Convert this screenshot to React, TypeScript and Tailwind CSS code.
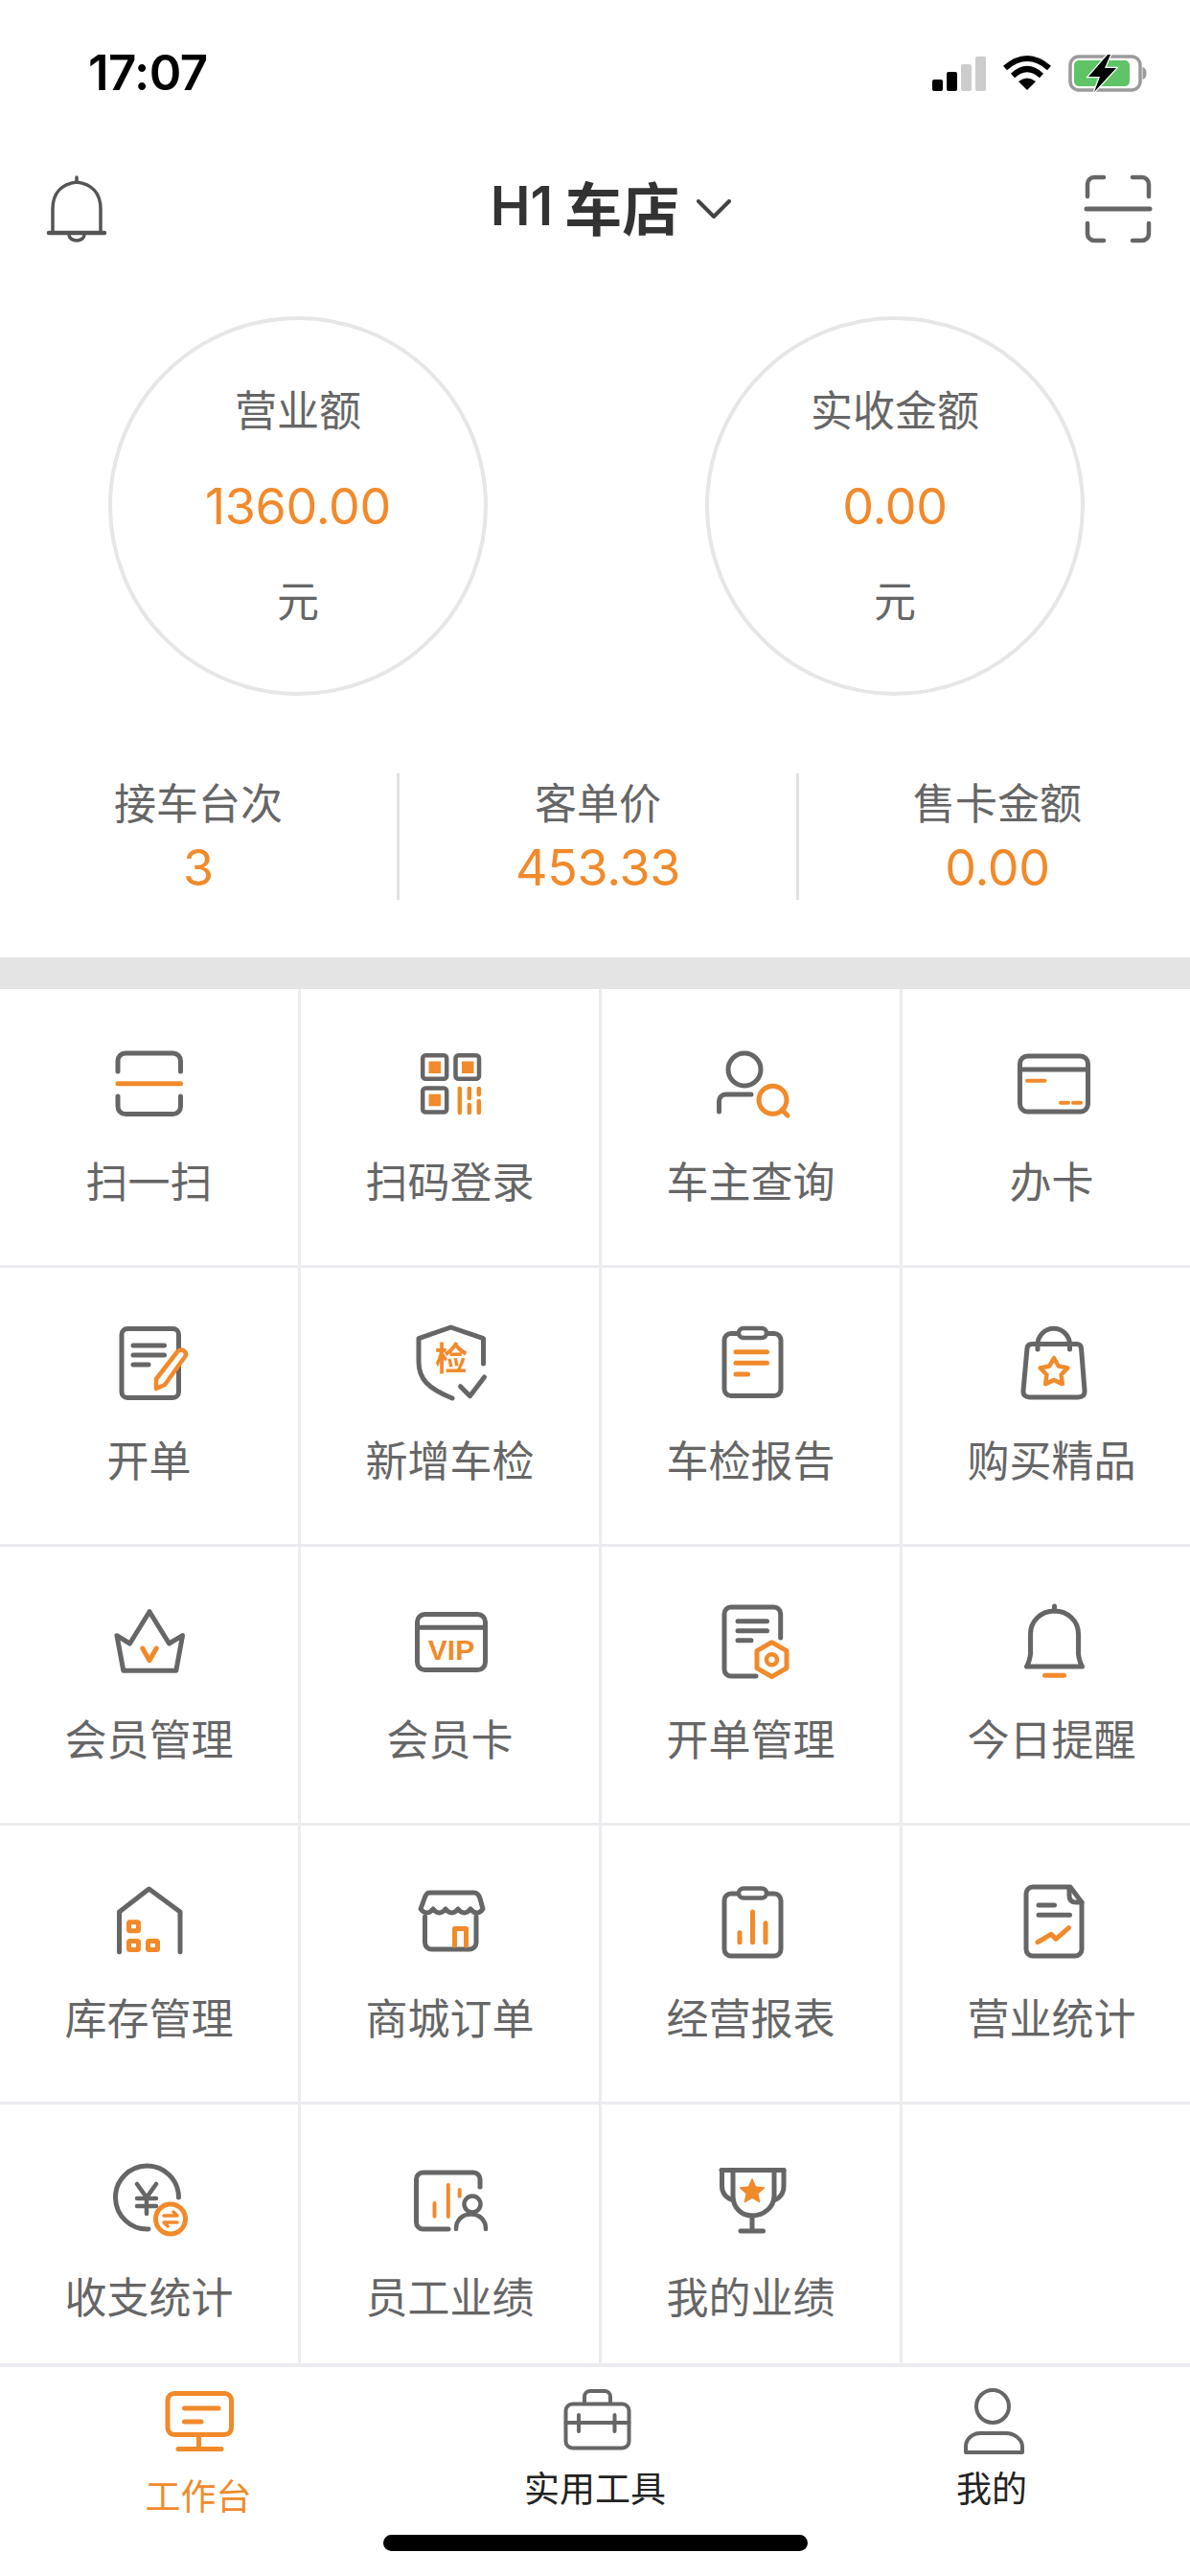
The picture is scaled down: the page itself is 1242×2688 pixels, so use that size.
import type { ReactNode } from "react";

const GRAY = "#666666";
const ORANGE = "#f18a2b";

function starPoints(cx: number, cy: number, R: number, r: number) {
  const pts: string[] = [];
  for (let i = 0; i < 10; i++) {
    const a = (-90 + i * 36) * (Math.PI / 180);
    const d = i % 2 === 0 ? R : r;
    pts.push(`${(cx + d * Math.cos(a)).toFixed(1)},${(cy + d * Math.sin(a)).toFixed(1)}`);
  }
  return pts.join(" ");
}

function Icon({ children, color = GRAY, width = 5 }: { children: ReactNode; color?: string; width?: number }) {
  return (
    <svg
      className="h-[100px] w-[100px] shrink-0"
      viewBox="0 0 100 100"
      fill="none"
      stroke={color}
      strokeWidth={width}
      strokeLinecap="round"
      strokeLinejoin="round"
    >
      {children}
    </svg>
  );
}

const gridItems: { label: string; icon: ReactNode }[] = [
  {
    label: "扫一扫",
    icon: (
      <Icon>
        <path d="M17 36V25a8 8 0 0 1 8-8h49.5a8 8 0 0 1 8 8v11" />
        <path d="M17 62v10.500a8 8 0 0 0 8 8h49.500a8 8 0 0 0 8-8V62" />
        <path d="M17 48.700h65.500" stroke={ORANGE} />
      </Icon>
    ),
  },
  {
    label: "扫码登录",
    icon: (
      <Icon width={4.5}>
        <rect x="21.200" y="19.200" width="25" height="24.500" rx="3" />
        <rect x="55.500" y="19.200" width="24.500" height="24.500" rx="3" />
        <rect x="21.200" y="53.500" width="25" height="25" rx="3" />
        <g fill={ORANGE} stroke="none">
          <rect x="27.500" y="25.500" width="12.500" height="12.500" />
          <rect x="62" y="25.500" width="12.500" height="12.500" />
          <rect x="27.500" y="59.700" width="12.500" height="12.500" />
        </g>
        <path d="M59.800 54v25M69.800 54v10M69.800 71v8M79.800 54v6M79.800 67v12" stroke={ORANGE} />
      </Icon>
    ),
  },
  {
    label: "车主查询",
    icon: (
      <Icon>
        <circle cx="43" cy="34" r="17" />
        <path d="M16.500 78V67a7 7 0 0 1 7-7H50" />
        <circle cx="72.500" cy="65.700" r="14.500" stroke={ORANGE} />
        <path d="M82 76l6 6" stroke={ORANGE} />
      </Icon>
    ),
  },
  {
    label: "办卡",
    icon: (
      <Icon>
        <rect x="16.500" y="20" width="71" height="58" rx="8" />
        <path d="M16.500 34h71" />
        <path d="M24 45.700h18.500M59 68.700h8M72 68.700h8" stroke={ORANGE} strokeWidth="4" />
      </Icon>
    ),
  },
  {
    label: "开单",
    icon: (
      <Icon>
        <rect x="21" y="13.500" width="59.500" height="72" rx="6" />
        <path d="M33 31h32.500M33 41h32.500M33 51h16" />
        <path
          d="M79.500 37Q84 34 87 37.500Q89 40 87.500 42L66 72L57 76L57 66Z"
          fill="#ffffff"
          stroke={ORANGE}
          strokeWidth="4.500"
        />
      </Icon>
    ),
  },
  {
    label: "新增车检",
    icon: (
      <Icon>
        <path d="M84.500 50V23.700L50.500 12L17 23.700V48C17 66 27 76 52 86" />
        <path d="M60.500 73.700L70.500 83.700L85.500 64" />
        <text
          x="51"
          y="57"
          textAnchor="middle"
          fontSize="34"
          fontWeight="700"
          fill={ORANGE}
          stroke="none"
          fontFamily='"Noto Sans CJK SC", sans-serif'
        >
          检
        </text>
      </Icon>
    ),
  },
  {
    label: "车检报告",
    icon: (
      <Icon>
        <rect x="22" y="18.500" width="59" height="65" rx="7" />
        <rect x="37" y="13" width="29" height="10" rx="5" fill="#ffffff" strokeWidth="4.500" />
        <path d="M34 37.700h32.500M34 49.300h32.500M34 61h12.500" stroke={ORANGE} />
      </Icon>
    ),
  },
  {
    label: "购买精品",
    icon: (
      <Icon>
        <path d="M29 29.500H76Q80 29.500 80.500 34L84 78Q84.500 85 77 85H27Q19.500 85 20 78L24 34Q24.500 29.500 29 29.500Z" />
        <path d="M35 35V30A16.700 16.700 0 0 1 68.500 30V35" />
        <polygon points={starPoints(52, 59, 15, 8)} stroke={ORANGE} strokeWidth="4.500" />
      </Icon>
    ),
  },
  {
    label: "会员管理",
    icon: (
      <Icon>
        <path d="M50 17.700L70.500 51L84.500 42.700L77.800 79.300H22.800L16 42.700L29.500 51Z" />
        <path d="M42.800 56L50 68.700L57.200 56" stroke={ORANGE} />
      </Icon>
    ),
  },
  {
    label: "会员卡",
    icon: (
      <Icon>
        <rect x="15.500" y="20.500" width="71" height="58" rx="8" />
        <path d="M15.500 34.300h71" />
        <text
          x="51"
          y="68"
          textAnchor="middle"
          fontSize="30"
          fontWeight="700"
          fill={ORANGE}
          stroke="none"
          fontFamily='"Liberation Sans", sans-serif'
        >
          VIP
        </text>
      </Icon>
    ),
  },
  {
    label: "开单管理",
    icon: (
      <Icon>
        <path d="M80.700 45V20a7 7 0 0 0-7-7H29a7 7 0 0 0-7 7v58a7 7 0 0 0 7 7h26" />
        <path d="M36 27.700h30.500M36 37.700h30.500M36 47.700h14" />
        <path d="M71.500 49.700L87 58.700V76.700L71.500 85.700L56 76.700V58.700Z" fill="#ffffff" stroke={ORANGE} />
        <circle cx="71.500" cy="67.700" r="5.500" stroke={ORANGE} strokeWidth="4.500" />
      </Icon>
    ),
  },
  {
    label: "今日提醒",
    icon: (
      <Icon>
        <path d="M23.500 75H81.500Q78.500 70 77.500 62V41C77.500 27 66 17 52.500 17C39 17 27.500 27 27.500 41V62Q26.500 70 23.500 75Z" />
        <path d="M52.500 12v5" />
        <path d="M42.500 84.300h20" stroke={ORANGE} />
      </Icon>
    ),
  },
  {
    label: "库存管理",
    icon: (
      <Icon>
        <path d="M18.500 81.700V40L49.500 16L82 40V81.700" />
        <g stroke={ORANGE} strokeWidth="5">
          <rect x="28.500" y="50.800" width="10" height="9" rx="1" />
          <rect x="28.500" y="70.500" width="10" height="9" rx="1" />
          <rect x="48.500" y="70.500" width="10" height="9" rx="1" />
        </g>
      </Icon>
    ),
  },
  {
    label: "商城订单",
    icon: (
      <Icon>
        <path d="M23.500 45V72a7 7 0 0 0 7 7H70a7 7 0 0 0 7-7V45" />
        <path d="M28 20H75Q79 20 81 26L84 37Q78 45 71 37Q64.500 45 58 37Q51.500 45 45 37Q38.500 45 32 37Q25.500 45 19 37L23 26Q25 20 28 20Z" fill="#ffffff" />
        <path d="M54.500 75V57.500H66.500V75" stroke={ORANGE} />
      </Icon>
    ),
  },
  {
    label: "经营报表",
    icon: (
      <Icon>
        <rect x="22" y="21" width="59" height="65" rx="7" />
        <rect x="37" y="15.500" width="29" height="10" rx="5" fill="#ffffff" strokeWidth="4.500" />
        <path d="M38 61.700v10M51.500 40v31.700M65 51.700v20" stroke={ORANGE} />
      </Icon>
    ),
  },
  {
    label: "营业统计",
    icon: (
      <Icon>
        <path d="M69 14H30a7 7 0 0 0-7 7V79a7 7 0 0 0 7 7H74a7 7 0 0 0 7-7V30Z" />
        <path d="M68 15V23Q68 30 75 30H81" />
        <path d="M36 33h16.500M36 43.300h32.500" />
        <path d="M35 71.700L49 63.300L54 68.300L67.500 56.700" stroke={ORANGE} />
      </Icon>
    ),
  },
  {
    label: "收支统计",
    icon: (
      <Icon>
        <path d="M80.500 47A33 33 0 1 0 49 80" />
        <path d="M37 33L47 47L57 33M37 48H57M37 56H57M47 47V64" strokeWidth="4.500" />
        <circle cx="72" cy="69.500" r="15.500" fill="#ffffff" stroke={ORANGE} />
        <path d="M65 66H79L75 62M79 73H65L69 77" stroke={ORANGE} strokeWidth="3.500" />
      </Icon>
    ),
  },
  {
    label: "员工业绩",
    icon: (
      <Icon>
        <path d="M81 36V28a7 7 0 0 0-7-7H21.500a7 7 0 0 0-7 7V73a7 7 0 0 0 7 7H48" />
        <path d="M33.500 53v13.700M47.800 34v33M59.700 39v6.700" stroke={ORANGE} strokeWidth="4" />
        <circle cx="73" cy="54" r="8.500" strokeWidth="4.500" />
        <path d="M56 80C56 70 63 64.500 71.500 64.500C80 64.500 87 70 87 80" strokeWidth="4.500" />
      </Icon>
    ),
  },
  {
    label: "我的业绩",
    icon: (
      <Icon>
        <path d="M19 18.500H84" />
        <path d="M31 18.500V45C31 58 40 66 51 66C62 66 74 58 74 45V18.500" />
        <path d="M19.500 18.500V35Q19.500 46 31 50M84 18.500V35Q84 46 74 50" />
        <path d="M51 66V82M39 82H62.500" />
        <polygon points={starPoints(51, 41, 13, 6)} fill={ORANGE} stroke={ORANGE} strokeWidth="1.500" />
      </Icon>
    ),
  },
];

function StatusBar() {
  return (
    <div className="flex h-[152px] items-center pl-[92px] pr-[45px]">
      <span className="font-['Inter',sans-serif] text-[51px] font-semibold tracking-[-0.6px] text-black">17:07</span>
      <div className="ml-auto flex items-center gap-[17px]">
        <div className="flex h-[38px] items-end gap-[4px]">
          <div className="h-[12px] w-[11px] rounded-[2px] bg-black" />
          <div className="h-[20px] w-[11px] rounded-[2px] bg-black" />
          <div className="h-[28px] w-[11px] rounded-[2px] bg-[#cccccc]" />
          <div className="h-[36px] w-[11px] rounded-[2px] bg-[#cccccc]" />
        </div>
        <svg className="h-[38px] w-[52px]" viewBox="0 0 52 38" fill="none" stroke="#000000" strokeWidth="6">
          <path d="M3 14Q26 -6 49 14" />
          <path d="M11 22Q26 8 41 22" />
          <path d="M26 37L17 28Q26 21 35 28Z" fill="#000000" stroke="none" />
        </svg>
        <svg className="h-[39px] w-[82px]" viewBox="0 0 82 39">
          <rect x="2" y="2" width="73" height="35" rx="9" fill="#ffffff" stroke="#9a9a9a" strokeWidth="3.500" />
          <rect x="6" y="6" width="58" height="27" rx="5" fill="#5fc466" />
          <path d="M77.500 13q4 1 4 6.500t-4 6.500z" fill="#9a9a9a" />
          <path d="M41 0L21 23H33L27 39L50 14H38L44 0Z" fill="#000000" stroke="#ffffff" strokeWidth="2.500" paintOrder="stroke" />
        </svg>
      </div>
    </div>
  );
}

function TopNav() {
  return (
    <div className="mt-[16px] flex h-[100px] items-center justify-between pl-[30px] pr-[25px]">
      <svg className="h-[100px] w-[100px]" viewBox="0 0 100 100" fill="none" stroke="#555555" strokeWidth="3.500" strokeLinecap="round">
        <path d="M25 75V50C25 34 34 24 50 22C66 24 75 34 75 50V75" />
        <path d="M50 17v5" />
        <path d="M21 75H79" strokeWidth="4.500" />
        <path d="M42 77a8 6 0 0 0 16 0" />
      </svg>
      <div className="flex items-center pb-[6px] pl-[28px]">
        <span className="font-['Inter',sans-serif] text-[56px] font-semibold leading-none text-[#333333]">H1</span>
        <span className="ml-[12px] text-[60px] font-semibold leading-none text-[#333333]">车店</span>
        <svg className="ml-[18px] mt-[6px] h-[20px] w-[36px]" viewBox="0 0 36 20" fill="none" stroke="#444444" strokeWidth="4" strokeLinecap="round" strokeLinejoin="round">
          <path d="M2 2L18 18L34 2" />
        </svg>
      </div>
      <svg className="h-[100px] w-[100px]" viewBox="0 0 100 100" fill="none" stroke={GRAY} strokeWidth="4.500" strokeLinecap="round">
        <path d="M18 37V24a7 7 0 0 1 7-7H35M65 17H75a7 7 0 0 1 7 7V37" />
        <path d="M18 65V76a7 7 0 0 0 7 7H35M65 83H75a7 7 0 0 0 7-7V65" />
        <path d="M17 50H83" strokeWidth="5" />
      </svg>
    </div>
  );
}

function AmountCircle({ title, value }: { title: string; value: string }) {
  return (
    <div className="flex h-[396px] w-[396px] flex-col items-center justify-center rounded-full border-[4px] border-[#e6e6e6]">
      <div className="h-[100px] text-[44px] leading-[96px] text-[#666666]">{title}</div>
      <div className="h-[100px] font-['Inter',sans-serif] text-[52px] leading-[102px] tracking-[-0.3px] text-[#f18a2b]">{value}</div>
      <div className="h-[100px] text-[44px] leading-[94px] text-[#666666]">元</div>
    </div>
  );
}

function Stat({ title, value, className }: { title: string; value: string; className: string }) {
  return (
    <div className={className}>
      <div className="h-[66px] text-[44px] leading-[58px] text-[#666666]">{title}</div>
      <div className="h-[66px] font-['Inter',sans-serif] text-[52px] leading-[66px] tracking-[-0.3px] text-[#f18a2b]">{value}</div>
    </div>
  );
}

function TabBar() {
  return (
    <div className="h-[222px] shrink-0 border-t-[4px] border-[#ebebf0] bg-white">
      <div className="grid h-[161px] grid-cols-3 pt-[15px]">
        <div className="flex flex-col items-center">
          <svg className="h-[80px] w-[100px]" viewBox="0 0 100 80" fill="none" stroke={ORANGE} strokeWidth="5" strokeLinecap="round" strokeLinejoin="round">
            <rect x="18" y="12.500" width="66.500" height="43" rx="7" />
            <path d="M50.500 56v14M29 70.500h45M35.500 28H71M35.500 42H53" />
          </svg>
          <span className="mt-[7px] text-[37px] leading-[62px] text-[#f18a2b]">工作台</span>
        </div>
        <div className="flex flex-col items-center">
          <svg className="h-[80px] w-[100px]" viewBox="0 0 100 80" fill="none" stroke={GRAY} strokeWidth="4" strokeLinecap="round" strokeLinejoin="round">
            <rect x="19.500" y="23.500" width="66" height="46" rx="7" />
            <path d="M39 23V16a6 6 0 0 1 6-6H60a6 6 0 0 1 6 6V23" />
            <path d="M19.500 43H85.500M33 35V52M70.500 35V52" />
          </svg>
          <span className="text-[37px] leading-[60px] text-[#222222]">实用工具</span>
        </div>
        <div className="flex flex-col items-center">
          <svg className="h-[80px] w-[100px]" viewBox="0 0 100 80" fill="none" stroke={GRAY} strokeWidth="4" strokeLinecap="round" strokeLinejoin="round">
            <circle cx="51" cy="26" r="17" />
            <path d="M23 74V68C23 60 30 54 38 54H65C73 54 82 60 82 68V74Z" />
          </svg>
          <span className="text-[37px] leading-[60px] text-[#222222]">我的</span>
        </div>
      </div>
      <div className="mx-auto mt-[14px] h-[17px] w-[443px] rounded-full bg-black" />
    </div>
  );
}

export default function App() {
  return (
    <div className="flex h-[2688px] w-[1242px] flex-col overflow-hidden bg-white font-['Noto_Sans_CJK_SC',sans-serif]">
      <StatusBar />
      <TopNav />

      <div className="mt-[62px] flex gap-[227px] pl-[113px]">
        <AmountCircle title="营业额" value="1360.00" />
        <AmountCircle title="实收金额" value="0.00" />
      </div>

      <div className="mt-[81px] flex h-[132px] text-center">
        <Stat title="接车台次" value="3" className="w-[417px] border-r-[3px] border-[#e2e2e2]" />
        <Stat title="客单价" value="453.33" className="w-[417px] border-r-[3px] border-[#e2e2e2]" />
        <Stat title="售卡金额" value="0.00" className="flex-1 pl-[6px]" />
      </div>

      <div className="mt-[60px] h-[33px] shrink-0 bg-[#e4e4e4]" />

      <div className="min-h-0 flex-1 overflow-hidden">
        <div className="grid w-[1256px] grid-cols-[repeat(4,311px)] auto-rows-[288px] gap-[3px] bg-[#ebebf0]">
          {gridItems.map((item) => (
            <div key={item.label} className="flex flex-col items-center bg-white pt-[50px]">
              {item.icon}
              <span className="text-[44px] leading-[98px] text-[#666666]">{item.label}</span>
            </div>
          ))}
          <div className="bg-white" />
        </div>
      </div>

      <TabBar />
    </div>
  );
}
